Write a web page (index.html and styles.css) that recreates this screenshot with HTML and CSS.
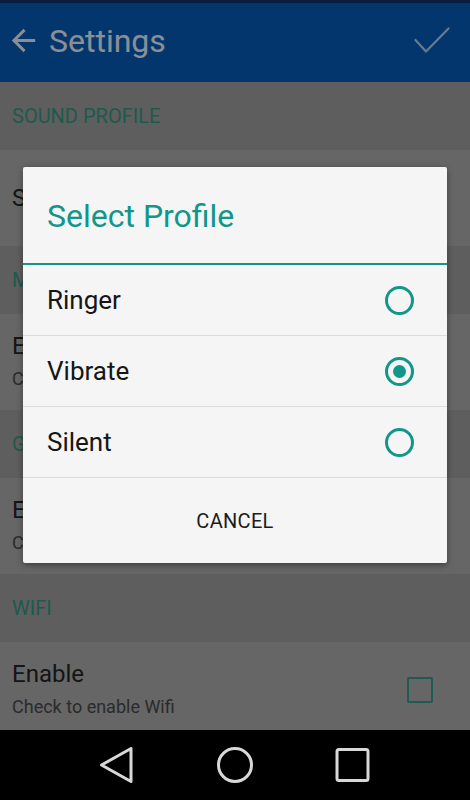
FILE: index.html
```html
<!DOCTYPE html>
<html lang="en">
<head>
    <meta charset="UTF-8">
    <meta name="viewport" content="width=device-width, initial-scale=1.0">
    <title>Settings</title>

    <link rel="stylesheet" href="styles.css">
</head>
<body>

<div class="screen">

    <!-- barra superior -->
    <div class="toolbar">
        <svg class="back" viewBox="0 0 24 24" width="35" height="35">
            <path d="M20 11H7.83l5.59-5.59L12 4l-8 8 8 8 1.41-1.41L7.83 13H20v-2z"/>
        </svg>
        <span class="titulo">Settings</span>
        <svg class="ok" viewBox="0 0 36 28" width="36" height="28">
            <polyline points="1.5,13 12,24.5 34.5,1.5"/>
        </svg>
    </div>

    <div class="seccion">SOUND PROFILE</div>
    <div class="item">
        <div class="textos">
            <div class="item-titulo">Sound Profile</div>
        </div>
    </div>

    <div class="seccion">MOBILE DATA</div>
    <div class="item">
        <div class="textos">
            <div class="item-titulo">Enable</div>
            <div class="item-sub">Check to enable Mobile Data</div>
        </div>
        <span class="check"></span>
    </div>

    <div class="seccion">GPS</div>
    <div class="item">
        <div class="textos">
            <div class="item-titulo">Enable</div>
            <div class="item-sub">Check to enable GPS</div>
        </div>
        <span class="check"></span>
    </div>

    <div class="seccion">WIFI</div>
    <div class="item">
        <div class="textos">
            <div class="item-titulo">Enable</div>
            <div class="item-sub">Check to enable Wifi</div>
        </div>
        <span class="check"></span>
    </div>

    <!-- fondo oscuro + dialogo -->
    <div class="scrim"></div>

    <div class="dialogo">
        <div class="dialogo-titulo">Select Profile</div>
        <div class="opcion">
            <span>Ringer</span>
            <span class="radio"></span>
        </div>
        <div class="opcion">
            <span>Vibrate</span>
            <span class="radio marcado"></span>
        </div>
        <div class="opcion">
            <span>Silent</span>
            <span class="radio"></span>
        </div>
        <div class="cancelar">CANCEL</div>
    </div>

</div>

<!-- botones de navegacion -->
<div class="navbar">
    <svg viewBox="0 0 36 36" width="36" height="36">
        <polygon points="1.5,18 31,1.5 31,34.5"/>
    </svg>
    <svg viewBox="0 0 36 36" width="36" height="36">
        <circle cx="18" cy="18" r="16.5"/>
    </svg>
    <svg viewBox="0 0 36 36" width="36" height="36">
        <rect x="3" y="2.5" width="31" height="31" rx="2"/>
    </svg>
</div>

</body>
</html>
```

FILE: styles.css
```css
body{
    margin: 0;
    width: 470px;
    height: 800px;
    font-family: Roboto, "Noto Sans", sans-serif;
    overflow: hidden;
    background: #000;
}

.screen{
    position: relative;
    height: 730px;
    overflow: hidden;
    background: #aaaaaa;
}

/* barra azul */
.toolbar{
    height: 79px;
    border-top: 3px solid #12316a;
    background-color: #065bb6;
    display: flex;
    align-items: center;
    padding: 0 20px 0 6px;
}
.back{
    fill: #e6eefa;
    margin-top: -4px;
}
.titulo{
    color: #e6eefa;
    font-size: 32px;
    margin-left: 8px;
    flex: 1;
    margin-top: -4px;
}
.ok{
    fill: none;
    stroke: #aacbf0;
    stroke-width: 2.2;
    stroke-linecap: round;
    stroke-linejoin: round;
    margin-top: -4px;
}

.seccion{
    height: 68px;
    background-color: #9d9d9d;
    color: #33967f;
    font-size: 20px;
    display: flex;
    align-items: center;
    padding: 0 12px;
}

.item{
    height: 96px;
    display: flex;
    align-items: center;
    padding: 0 37px 0 12px;
}
.textos{
    flex: 1;
}
.item-titulo{
    color: #232323;
    font-size: 24px;
    line-height: 30px;
}
.item-sub{
    color: #484848;
    font-size: 18px;
    line-height: 28px;
    margin-top: 4px;
}
.check{
    width: 26px;
    height: 26px;
    box-sizing: border-box;
    border: 2.5px solid #30998a;
    border-radius: 2px;
}

.scrim{
    position: absolute;
    inset: 0;
    background: rgba(0, 0, 0, 0.4);
}

/* dialogo */
.dialogo{
    position: absolute;
    left: 23px;
    top: 167px;
    width: 424px;
    background: #f5f5f5;
    border-radius: 2px;
    box-shadow: 0 2px 6px rgba(0, 0, 0, 0.4);
}
.dialogo-titulo{
    color: #10968a;
    font-size: 32px;
    line-height: 40px;
    padding: 29px 24px 27px;
    border-bottom: 2px solid #13978a;
}
.opcion{
    height: 70px;
    border-bottom: 1px solid #dcdcdc;
    display: flex;
    align-items: center;
    justify-content: space-between;
    padding: 0 33px 0 24px;
    font-size: 26px;
    color: #161616;
}
.radio{
    width: 29px;
    height: 29px;
    box-sizing: border-box;
    border: 3px solid #12968a;
    border-radius: 50%;
    display: flex;
    align-items: center;
    justify-content: center;
}
.marcado::after{
    content: "";
    width: 13px;
    height: 13px;
    border-radius: 50%;
    background: #12968a;
}
.cancelar{
    height: 85px;
    display: flex;
    align-items: center;
    justify-content: center;
    font-size: 20px;
    color: #1c1c1c;
    letter-spacing: 0.3px;
}

.navbar{
    height: 70px;
    background: #000;
    display: flex;
    align-items: center;
    justify-content: center;
    gap: 81px;
}
.navbar svg{
    fill: none;
    stroke: #d8d8d8;
    stroke-width: 3;
    stroke-linejoin: round;
}
```
